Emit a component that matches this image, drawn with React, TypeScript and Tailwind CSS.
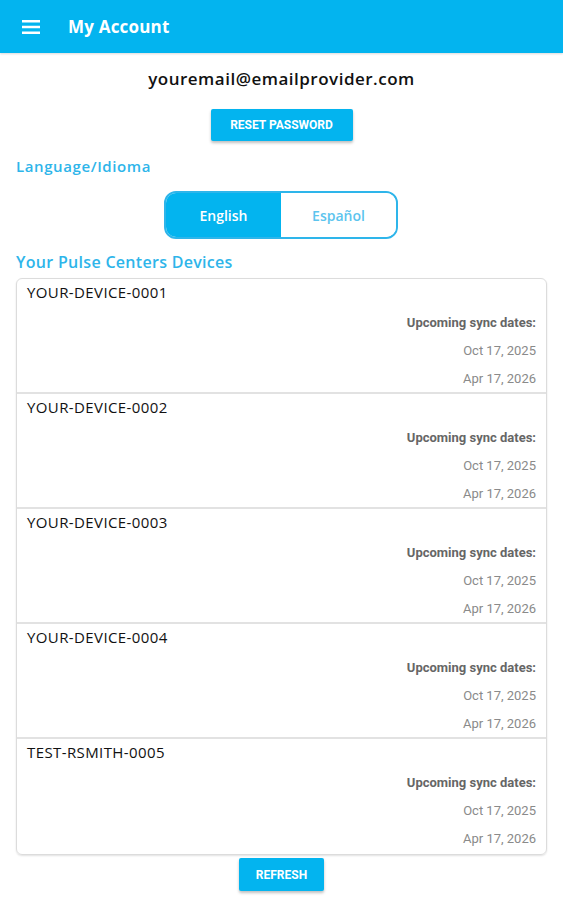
import React from 'react';

const devices = ['YOUR-DEVICE-0001', 'YOUR-DEVICE-0002', 'YOUR-DEVICE-0003', 'YOUR-DEVICE-0004', 'TEST-RSMITH-0005'];

const DeviceRow: React.FC<{ name: string; last: boolean }> = ({ name, last }) => (
  <div className={`h-[115px] px-[10px] pt-[3px] ${last ? '' : 'border-b-2 border-[#e2e2e2]'}`}>
    <div className="text-[15px] text-[#111] tracking-[0.4px] leading-[20px]" style={{ fontFamily: '"Open Sans", sans-serif' }}>
      {name}
    </div>
    <div className="mt-[7px] flex flex-col items-end text-[13px] leading-[28px] font-['Roboto',sans-serif]">
      <span className="font-bold text-[#666]">Upcoming sync dates:</span>
      <span className="text-[#8a8a8a]">Oct 17, 2025</span>
      <span className="text-[#8a8a8a]">Apr 17, 2026</span>
    </div>
  </div>
);

export default function App() {
  return (
    <div className="w-[563px] h-[900px] bg-white overflow-hidden font-['Open_Sans',sans-serif]">
      <header className="h-[53px] bg-[#03b4ef] flex items-center shadow-[0_1px_2px_rgba(0,0,0,0.15)]">
        <svg className="ml-[22px]" width="18" height="14" viewBox="0 0 18 14" fill="white">
          <rect x="0" y="0" width="18" height="2.5" />
          <rect x="0" y="5.75" width="18" height="2.5" />
          <rect x="0" y="11.5" width="18" height="2.5" />
        </svg>
        <h1 className="ml-[28px] text-white text-[17px] font-bold tracking-[0.2px]">My Account</h1>
      </header>

      <div className="text-center mt-[14px] text-[17px] font-semibold text-[#111] leading-[24px] tracking-[0.5px]">
        youremail@emailprovider.com
      </div>

      <div className="flex justify-center mt-[18px]">
        <button className="w-[142px] h-[32px] bg-[#03b4ef] text-white text-[12px] font-bold font-['Roboto',sans-serif] rounded-[2px] shadow-[0_2px_3px_rgba(0,0,0,0.25)]">
          RESET PASSWORD
        </button>
      </div>

      <div className="px-4 mt-[14px] text-[15px] text-[#2eb5ea] font-semibold leading-[22px] tracking-[0.6px]">Language/Idioma</div>

      <div className="flex justify-center mt-[14px]">
        <div className="ml-[-1px] flex w-[234px] h-[48px] border-2 border-[#2eb5ea] rounded-[12px] overflow-hidden text-[14px] font-semibold">
          <div className="flex-1 bg-[#03b4ef] text-white flex items-center justify-center">English</div>
          <div className="flex-1 bg-white text-[#5cc4ee] flex items-center justify-center">Español</div>
        </div>
      </div>

      <div className="px-4 mt-[11px] text-[16px] text-[#2eb5ea] font-semibold leading-[24px] tracking-[0.3px]">Your Pulse Centers Devices</div>

      <div className="mx-4 mt-[4px] border border-[#dcdcdc] rounded-[6px] shadow-[0_1px_2px_rgba(0,0,0,0.12)] overflow-hidden">
        {devices.map((d, i) => (
          <DeviceRow key={d} name={d} last={i === devices.length - 1} />
        ))}
      </div>

      <div className="flex justify-center mt-[3px]">
        <button className="w-[85px] h-[33px] bg-[#03b4ef] text-white text-[12px] font-bold font-['Roboto',sans-serif] rounded-[2px] shadow-[0_2px_3px_rgba(0,0,0,0.25)]">
          REFRESH
        </button>
      </div>
    </div>
  );
}
